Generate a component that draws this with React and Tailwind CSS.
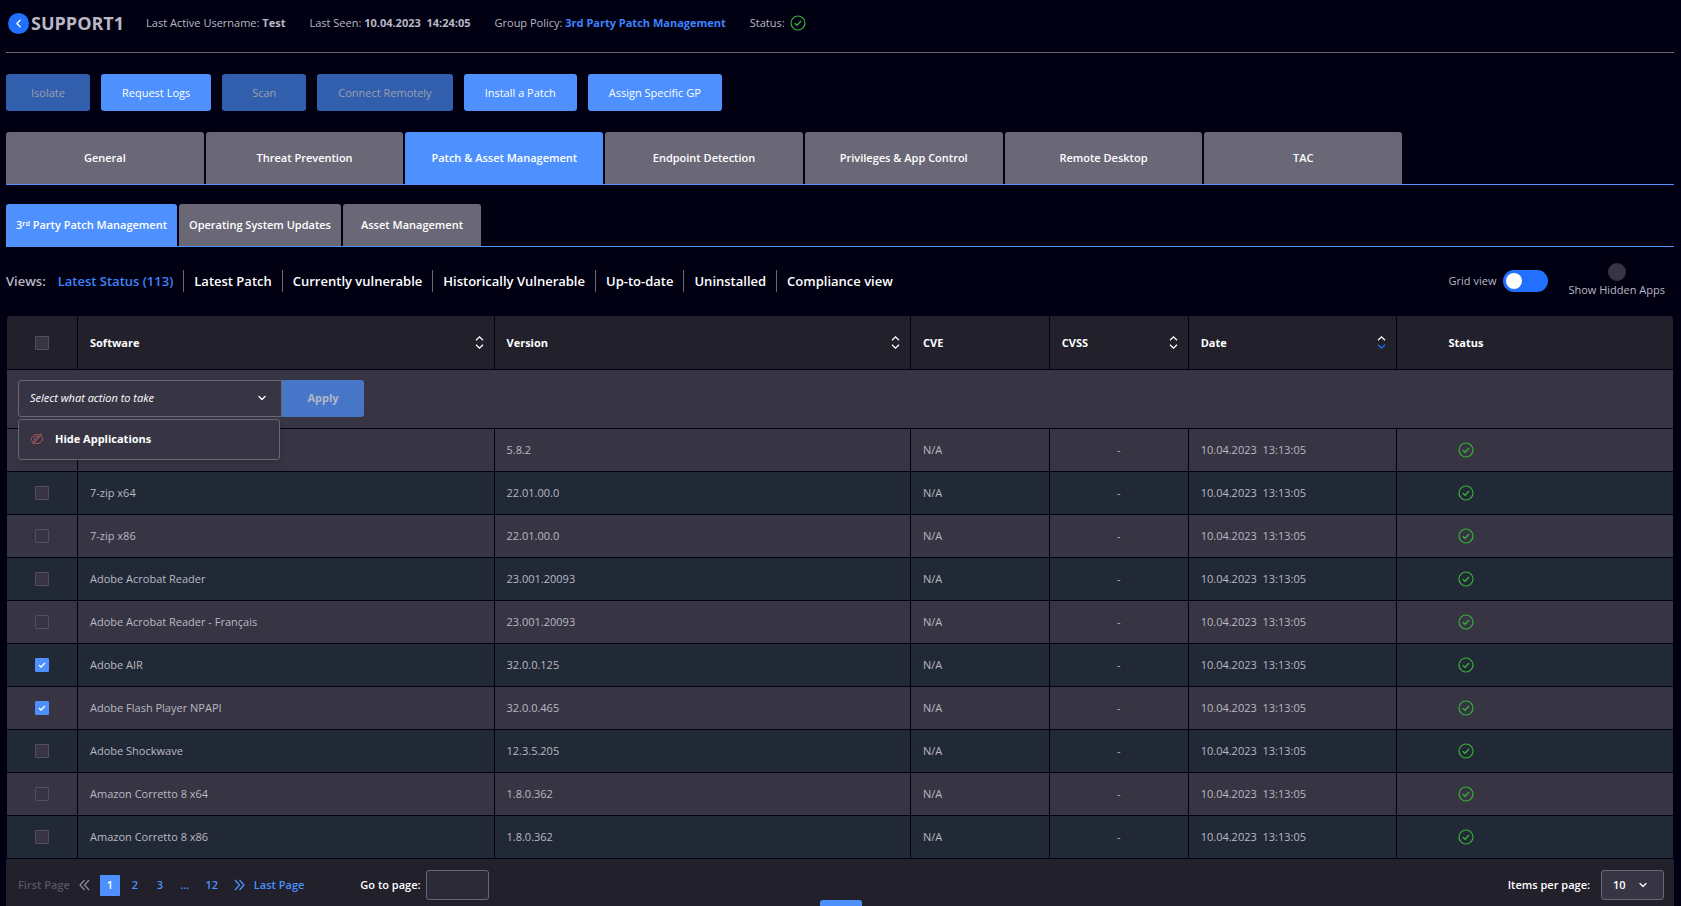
import React, { useState } from "react";
import { ChevronDown, ChevronLeft } from "lucide-react";

const actions = [
  { label: "Isolate", disabled: true },
  { label: "Request Logs" },
  { label: "Scan", disabled: true },
  { label: "Connect Remotely", disabled: true },
  { label: "Install a Patch" },
  { label: "Assign Specific GP" },
];

const tabs = [
  "General",
  "Threat Prevention",
  "Patch & Asset Management",
  "Endpoint Detection",
  "Privileges & App Control",
  "Remote Desktop",
  "TAC",
];

const views = [
  "Latest Status (113)",
  "Latest Patch",
  "Currently vulnerable",
  "Historically Vulnerable",
  "Up-to-date",
  "Uninstalled",
  "Compliance view",
];

const software = [
  { id: 1, name: "", version: "5.8.2" },
  { id: 2, name: "7-zip x64", version: "22.01.00.0" },
  { id: 3, name: "7-zip x86", version: "22.01.00.0" },
  { id: 4, name: "Adobe Acrobat Reader", version: "23.001.20093" },
  { id: 5, name: "Adobe Acrobat Reader - Français", version: "23.001.20093" },
  { id: 6, name: "Adobe AIR", version: "32.0.0.125" },
  { id: 7, name: "Adobe Flash Player NPAPI", version: "32.0.0.465" },
  { id: 8, name: "Adobe Shockwave", version: "12.3.5.205" },
  { id: 9, name: "Amazon Corretto 8 x64", version: "1.8.0.362" },
  { id: 10, name: "Amazon Corretto 8 x86", version: "1.8.0.362" },
];

const StatusIcon = () => (
  <svg
    className="size-4 shrink-0"
    viewBox="0 0 16 16"
    fill="none"
    stroke="#38b037"
    strokeWidth="1.2"
    role="img"
    aria-label="OK"
  >
    <circle cx="8" cy="8" r="7" />
    <path d="M4.8 8.3 7 10.3l4.1-4.2" strokeWidth="1.4" />
  </svg>
);

const HiddenIcon = () => (
  <svg
    className="size-[14px] shrink-0"
    viewBox="0 0 14 14"
    fill="none"
    stroke="#a9575f"
    strokeWidth="1"
    aria-hidden="true"
  >
    <path d="M1 7c1.2-2.900 3.300-4.500 6-4.500s4.800 1.600 6 4.500c-1.200 2.900-3.300 4.500-6 4.500S2.200 9.900 1 7Z" />
    <path d="M4.700 8.200A2.500 2.500 0 0 1 8.300 4.900" />
    <path d="M2.500 12.200 11.800 1.600" strokeWidth="1.200" />
  </svg>
);

const DoubleChevron = ({ flip }) => (
  <svg
    className={`h-3 w-[11px] ${flip ? "rotate-180" : ""}`}
    viewBox="0 0 11 12"
    fill="none"
    stroke="currentColor"
    strokeWidth="1.3"
    aria-hidden="true"
  >
    <path d="M5.500 1 1 6l4.500 5M10 1 5.500 6l4.500 5" />
  </svg>
);

const Checkbox = ({ label, checked, onChange }) => (
  <span className="mx-auto grid size-[14px] place-items-center">
    <input
      type="checkbox"
      aria-label={label}
      checked={checked}
      onChange={onChange}
      className="col-start-1 row-start-1 size-[14px] appearance-none rounded-[1px] border border-[#514f5e] bg-[#373544] checked:border-[#4d90fe] checked:bg-[#4d90fe]"
    />
    {checked && (
      <svg
        className="pointer-events-none col-start-1 row-start-1 size-2"
        viewBox="0 0 8 8"
        fill="none"
        stroke="white"
        strokeWidth="1.3"
      >
        <path d="m1 4 2 2 4-4" />
      </svg>
    )}
  </span>
);

const SortButton = ({ label, desc }) => (
  <button
    type="button"
    aria-label={`Sort by ${label}`}
    className="flex flex-col items-center gap-[3px] text-white"
  >
    <svg className="h-[5px] w-[9px]" viewBox="0 0 9 5" fill="none" stroke="currentColor" strokeWidth="1.3">
      <path d="m1 4.300 3.500-3.400L8 4.300" />
    </svg>
    <svg
      className={`h-[5px] w-[9px] ${desc ? "text-[#2170ff]" : ""}`}
      viewBox="0 0 9 5"
      fill="none"
      stroke="currentColor"
      strokeWidth="1.3"
    >
      <path d="M1 .7 4.500 4.100 8 .7" />
    </svg>
  </button>
);

const HeaderCell = ({ label, sortable, desc }) => (
  <th className="border-r border-b border-[#000012] pr-[10px] pl-3 text-left">
    <div className="flex items-center justify-between">
      <span>{label}</span>
      {sortable && <SortButton label={label} desc={desc} />}
    </div>
  </th>
);

const App = () => {
  const [selected, setSelected] = useState([6, 7]);
  const [activeTab, setActiveTab] = useState("Patch & Asset Management");
  const [activeView, setActiveView] = useState("Latest Status (113)");
  const [gridView, setGridView] = useState(false);

  const toggleRow = (id) => {
    setSelected(
      selected.includes(id) ? selected.filter((x) => x !== id) : [...selected, id]
    );
  };

  const cell = "border-r border-b border-[#000012] px-3";

  return (
    <div className="h-screen overflow-hidden bg-[#000012] pr-[7px] pl-[6px] font-['Open_Sans','Noto_Sans',sans-serif] text-[11px] leading-4 text-[#b9b8c3]">
      <header className="flex h-[53px] items-start border-b border-[#6a6877] pt-3">
        <div className="flex h-[22px] items-center gap-[2px] pl-[2px]">
          <button
            type="button"
            aria-label="Back"
            className="flex size-[21px] items-center justify-center rounded-full bg-[#2170ff] text-white"
          >
            <ChevronLeft size={13} strokeWidth={2.5} />
          </button>
          <h1 className="text-[18px] leading-[22px] font-bold">SUPPORT1</h1>
        </div>
        <div className="ml-[22px] flex h-[22px] items-center gap-6">
          <p>
            Last Active Username: <b>Test</b>
          </p>
          <p>
            Last Seen: <b className="whitespace-pre">10.04.2023  14:24:05</b>
          </p>
          <p>
            Group Policy:{" "}
            <a href="#policy" className="font-bold text-[#3f83fb]">
              3rd Party Patch Management
            </a>
          </p>
          <p className="flex items-center gap-[5px]">
            Status: <StatusIcon />
          </p>
        </div>
      </header>

      <div className="mt-[21px] flex gap-[11px]">
        {actions.map((action) => (
          <button
            key={action.label}
            type="button"
            disabled={action.disabled}
            className={`h-[37px] min-w-[84px] rounded-[3px] px-[21px] ${
              action.disabled ? "bg-[#325fad] text-[#9d9fae]" : "bg-[#4d90fe] text-white"
            }`}
          >
            {action.label}
          </button>
        ))}
      </div>

      <nav className="mt-[21px] border-b border-[#4d90fe]">
        <div className="flex max-w-[1396px] gap-[2px]">
          {tabs.map((tab) => (
            <button
              key={tab}
              type="button"
              onClick={() => setActiveTab(tab)}
              className={`h-[52px] flex-1 rounded-t-[3px] font-semibold text-white ${
                tab === activeTab ? "bg-[#4d90fe]" : "bg-[#6a6877]"
              }`}
            >
              {tab}
            </button>
          ))}
        </div>
      </nav>

      <nav className="mt-[19px] flex gap-[2px] border-b border-[#4d90fe] font-semibold text-white">
        <button type="button" className="h-[42px] rounded-t-[3px] bg-[#4d90fe] px-[10px]">
          3ʳᵈ Party Patch Management
        </button>
        <button type="button" className="h-[42px] rounded-t-[3px] bg-[#6a6877] px-[10px]">
          Operating System Updates
        </button>
        <button type="button" className="h-[42px] rounded-t-[3px] bg-[#6a6877] px-[18px]">
          Asset Management
        </button>
      </nav>

      <div className="flex h-[69px] items-center justify-between pb-[2px]">
        <div className="flex items-center gap-[2px] text-[13px] leading-[22px] font-semibold">
          <span>Views:</span>
          <div className="flex divide-x divide-[#6a6877]">
            {views.map((view) => (
              <button
                key={view}
                type="button"
                onClick={() => setActiveView(view)}
                className={`px-[10px] ${view === activeView ? "text-[#3f83fb]" : "text-white"}`}
              >
                {view}
              </button>
            ))}
          </div>
        </div>
        <div className="flex items-center gap-5 pr-[9px]">
          <label className="flex items-center gap-[7px]">
            Grid view
            <input
              type="checkbox"
              role="switch"
              checked={gridView}
              onChange={() => setGridView(!gridView)}
              className="h-[22px] w-[45px] appearance-none rounded-full bg-[#2170ff] p-[3px] before:block before:size-4 before:rounded-full before:bg-white checked:before:ml-auto"
            />
          </label>
          <label className="flex flex-col items-center gap-px">
            <input type="checkbox" className="size-[18px] appearance-none rounded-full bg-[#373544]" />
            Show Hidden Apps
          </label>
        </div>
      </div>

      <table className="ml-px w-[calc(100%-2px)] table-fixed border-separate border-spacing-0">
        <colgroup>
          <col className="w-[71px]" />
          <col className="w-[25%]" />
          <col className="w-[25%]" />
          <col className="w-1/12" />
          <col className="w-1/12" />
          <col className="w-[12.5%]" />
          <col />
        </colgroup>
        <thead>
          <tr className="h-[54px] bg-[#21202b] font-bold text-white">
            <th className="rounded-tl-[3px] border-r border-b border-[#000012]">
              <Checkbox
                label="Select all software"
                checked={selected.length === software.length}
                onChange={(e) => setSelected(e.target.checked ? software.map((s) => s.id) : [])}
              />
            </th>
            <HeaderCell label="Software" sortable />
            <HeaderCell label="Version" sortable />
            <HeaderCell label="CVE" />
            <HeaderCell label="CVSS" sortable />
            <HeaderCell label="Date" sortable desc />
            <th className="rounded-tr-[3px] border-b border-[#000012]">
              <div className="w-1/2">Status</div>
            </th>
          </tr>
        </thead>
        <tbody>
          <tr className="h-[59px] bg-[#373544]">
            <td colSpan={7} className="border-b border-[#000012] pb-[2px] pl-[11px]">
              <div className="relative flex">
                <div className="grid w-[264px] items-center">
                  <select
                    aria-label="Action"
                    className="col-start-1 row-start-1 h-[37px] appearance-none rounded-l-[3px] border border-[#6a6877] bg-[#373544] pl-[11px] text-white italic"
                  >
                    <option>Select what action to take</option>
                  </select>
                  <ChevronDown
                    size={12}
                    strokeWidth={2.5}
                    className="pointer-events-none col-start-1 row-start-1 mr-[14px] justify-self-end text-white"
                  />
                </div>
                <button
                  type="button"
                  disabled
                  className="h-[37px] w-[82px] rounded-r-[3px] bg-[#4775c8] font-bold text-[#b3b7c6]"
                >
                  Apply
                </button>
                {/* opened action list, lies over the first row */}
                <div className="absolute top-full left-0 z-10 mt-[2px] w-[262px] rounded-[3px] border border-[#6a6877] bg-[#373544] shadow-md">
                  <button
                    type="button"
                    className="flex h-[39px] w-full items-center gap-[11px] pl-[11px] font-bold text-white"
                  >
                    <HiddenIcon />
                    Hide Applications
                  </button>
                </div>
              </div>
            </td>
          </tr>
          {software.map((item, index) => (
            <tr
              key={item.id}
              className={`h-[43px] ${index % 2 === 0 ? "bg-[#373544]" : "bg-[#222936]"}`}
            >
              <td className="border-r border-b border-[#000012]">
                <Checkbox
                  label={`Select ${item.name}`}
                  checked={selected.includes(item.id)}
                  onChange={() => toggleRow(item.id)}
                />
              </td>
              <td className={cell}>{item.name}</td>
              <td className={cell}>{item.version}</td>
              <td className={cell}>N/A</td>
              <td className={`${cell} text-center`}>-</td>
              <td className={`${cell} whitespace-pre`}>10.04.2023  13:13:05</td>
              <td className="border-b border-[#000012]">
                <div className="flex w-1/2 justify-center">
                  <StatusIcon />
                </div>
              </td>
            </tr>
          ))}
        </tbody>
      </table>

      <footer className="flex h-[58px] items-start justify-between bg-[#21202b] px-[10px] pt-[11px] font-semibold">
        <div className="flex h-[30px] items-center">
          <button type="button" disabled className="mr-[9px] ml-[2px] text-[#575564]">
            First Page
          </button>
          <button type="button" disabled aria-label="Previous page" className="text-[#8b8997]">
            <DoubleChevron />
          </button>
          <div className="mr-3 ml-[10px] flex gap-[5px] text-[#4d90fe]">
            <button type="button" className="h-[21px] w-5 rounded-[1px] bg-[#4d90fe] text-white">
              1
            </button>
            <button type="button" className="w-5">2</button>
            <button type="button" className="w-5">3</button>
            <span className="flex w-5 items-center justify-center">...</span>
            <button type="button" className="ml-[2px] w-5">12</button>
          </div>
          <button type="button" aria-label="Next page" className="text-[#4d90fe]">
            <DoubleChevron flip />
          </button>
          <button type="button" className="ml-[9px] text-[#4d90fe]">
            Last Page
          </button>
          <label className="ml-14 flex items-center gap-[6px] text-white">
            Go to page:
            <input
              type="text"
              className="h-[30px] w-[63px] rounded-[3px] border border-[#6a6877] bg-[#2b2936] px-2"
            />
          </label>
        </div>
        <label className="flex items-center gap-[11px] text-white">
          Items per page:
          <span className="grid w-[63px] items-center">
            <select className="col-start-1 row-start-1 h-[30px] appearance-none rounded-[3px] border border-[#6a6877] bg-[#373544] pl-[11px]">
              <option>10</option>
              <option>25</option>
              <option>50</option>
            </select>
            <ChevronDown
              size={12}
              strokeWidth={2.5}
              className="pointer-events-none col-start-1 row-start-1 mr-[15px] justify-self-end"
            />
          </span>
        </label>
      </footer>

      {/* collapsed drawer handle at the bottom edge */}
      <button
        type="button"
        aria-label="Open drawer"
        className="fixed bottom-0 left-1/2 z-10 h-[6px] w-[42px] -translate-x-1/2 rounded-t-[3px] bg-[#4d90fe]"
      />
    </div>
  );
};

export default App;
